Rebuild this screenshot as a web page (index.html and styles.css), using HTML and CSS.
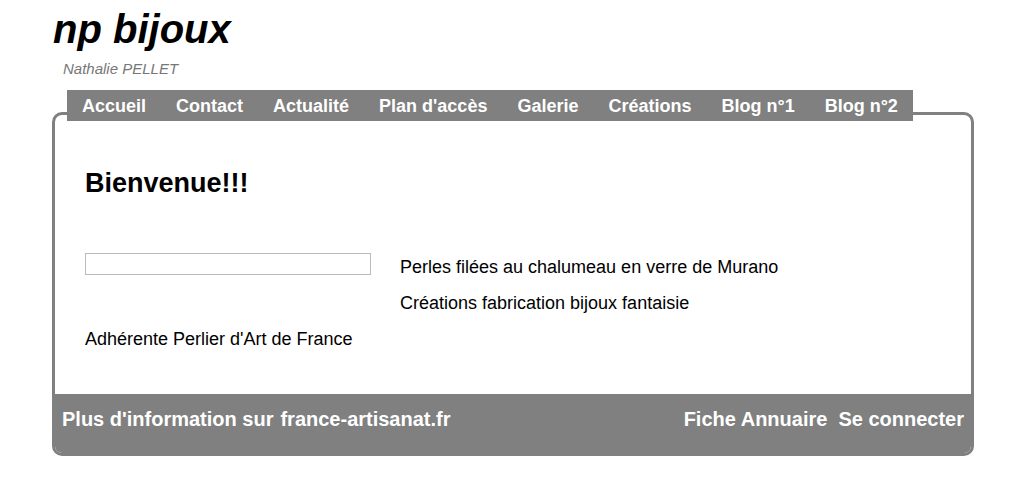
FILE: index.html
```html
<!DOCTYPE html>
<html lang="fr">
<head>
    <meta charset="UTF-8">
    <meta name="viewport" content="width=device-width, initial-scale=1.0">
    <title>np bijoux</title>
    <link rel="stylesheet" href="styles.css">
</head>
<body>
    <div class="page">
        <div class="header">
            <h1 class="site-title">np bijoux</h1>
            <div class="site-subtitle">Nathalie PELLET</div>
        </div>

        <ul class="menu">
            <li><a href="#">Accueil</a></li>
            <li><a href="#">Contact</a></li>
            <li><a href="#">Actualité</a></li>
            <li><a href="#">Plan d'accès</a></li>
            <li><a href="#">Galerie</a></li>
            <li><a href="#">Créations</a></li>
            <li><a href="#">Blog n°1</a></li>
            <li><a href="#">Blog n°2</a></li>
        </ul>

        <div class="box">
            <div class="content">
                <h2>Bienvenue!!!</h2>
                <div class="intro">
                    <div class="picture"></div>
                    <div class="intro-text">
                        <p>Perles filées au chalumeau en verre de Murano</p>
                        <p>Créations fabrication bijoux fantaisie</p>
                    </div>
                </div>
                <p>Adhérente Perlier d'Art de France</p>
            </div>

            <div class="footer">
                <div class="footer-left">
                    <span>Plus d'information sur</span>
                    <a href="#">france-artisanat.fr</a>
                </div>
                <div class="footer-right">
                    <a href="#">Fiche Annuaire</a>
                    <a href="#">Se connecter</a>
                </div>
            </div>
        </div>
    </div>
</body>
</html>
```

FILE: styles.css
```css
body {
    font-family: "Liberation Sans", Arial, sans-serif;
    background-color: #fff;
    color: #000;
    margin: 0;
    padding: 0;
}

.page {
    width: 922px;
    margin-left: 52px;
    padding-top: 6px;
}

.site-title {
    font-size: 40px;
    font-style: italic;
    font-weight: bold;
    line-height: 46px;
    margin: 0;
    padding-left: 1px;
}

.site-subtitle {
    font-size: 15px;
    font-style: italic;
    line-height: 18px;
    color: #777;
    margin: 8px 0 0 11px;
}

.menu {
    list-style: none;
    display: inline-flex;
    margin: 12px 0 0 15px;
    padding: 0;
    background-color: #808080;
    position: relative;
    z-index: 1;
}

.menu a {
    display: block;
    padding: 1px 15px 0;
    line-height: 30px;
    font-size: 18px;
    font-weight: bold;
    color: #fff;
    text-decoration: none;
}

.box {
    margin-top: -9px;
    border: 3px solid #808080;
    border-radius: 10px;
    overflow: hidden;
}

.content {
    padding: 52px 30px 37px;
    font-size: 18px;
}

.content h2 {
    font-size: 27px;
    line-height: 32px;
    margin: 0 0 50px;
}

.content p {
    margin: 0;
    line-height: 36px;
}

.intro {
    display: flex;
    gap: 29px;
}

.picture {
    width: 284px;
    height: 20px;
    margin-top: 4px;
    border: 1px solid #bbb;
}

.footer {
    display: flex;
    justify-content: space-between;
    background-color: #808080;
    padding: 13px 7px 22px;
    font-size: 20px;
    font-weight: bold;
    line-height: 24px;
    color: #fff;
}

.footer a {
    color: #fff;
    text-decoration: none;
}

.footer-left, .footer-right {
    display: flex;
}

.footer-left {
    gap: 7px;
}

.footer-right {
    gap: 11px;
}
```
